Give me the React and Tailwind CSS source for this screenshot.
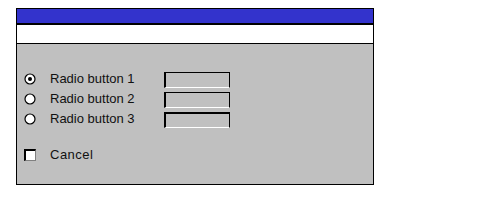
import React from "react";

function Radio({ checked }) {
  return (
    <svg width="12" height="12" viewBox="0 0 12 12" className="shrink-0">
      <circle cx="6" cy="6" r="5" fill="#ffffff" stroke="#000000" strokeWidth="1.2" />
      {checked && <circle cx="6" cy="6" r="2" fill="#000000" />}
    </svg>
  );
}

function Field({ thickTop }) {
  return (
    <div
      className={`w-[66px] h-[16px] bg-[#c0c0c0] border-l-2 border-r border-b border-l-black border-r-black border-b-white border-t-black ${
        thickTop ? "border-t-2" : "border-t"
      }`}
    />
  );
}

function Row({ label, checked, thickTop }) {
  return (
    <div className="flex items-center h-[16px]">
      <div className="w-[33px] flex items-center pl-[7px] mb-[2px]">
        <Radio checked={checked} />
      </div>
      <span className="w-[114px] text-[13px] leading-none text-[#111] mb-[3px]">{label}</span>
      <Field thickTop={thickTop} />
    </div>
  );
}

export default function App() {
  return (
    <div
      className="w-[481px] h-[200px] bg-white pl-[16px] pt-[8px]"
      style={{ fontFamily: '"Liberation Sans", Arial, sans-serif' }}
    >
      <div className="w-[358px] h-[177px] border border-black flex flex-col">
        <div className="h-[14px] bg-[#3333cc] border-b-2 border-black box-content" />
        <div className="h-[18px] bg-white border-b border-black box-content" />
        <div className="flex-1 bg-[#c0c0c0] pt-[28px] flex flex-col">
          <div className="flex flex-col gap-[4px]">
            <Row label="Radio button 1" checked />
            <Row label="Radio button 2" />
            <Row label="Radio button 3" thickTop />
          </div>
          <div className="flex items-center mt-[21px] h-[12px]">
            <div className="w-[33px] pl-[7px] flex items-center">
              <div className="w-[12px] h-[12px] bg-white border-l-2 border-t-2 border-black border-r border-b border-r-[#808080] border-b-[#808080]" />
            </div>
            <span className="text-[13px] leading-none text-[#111] tracking-[0.5px] mb-[2px]">Cancel</span>
          </div>
        </div>
      </div>
    </div>
  );
}
